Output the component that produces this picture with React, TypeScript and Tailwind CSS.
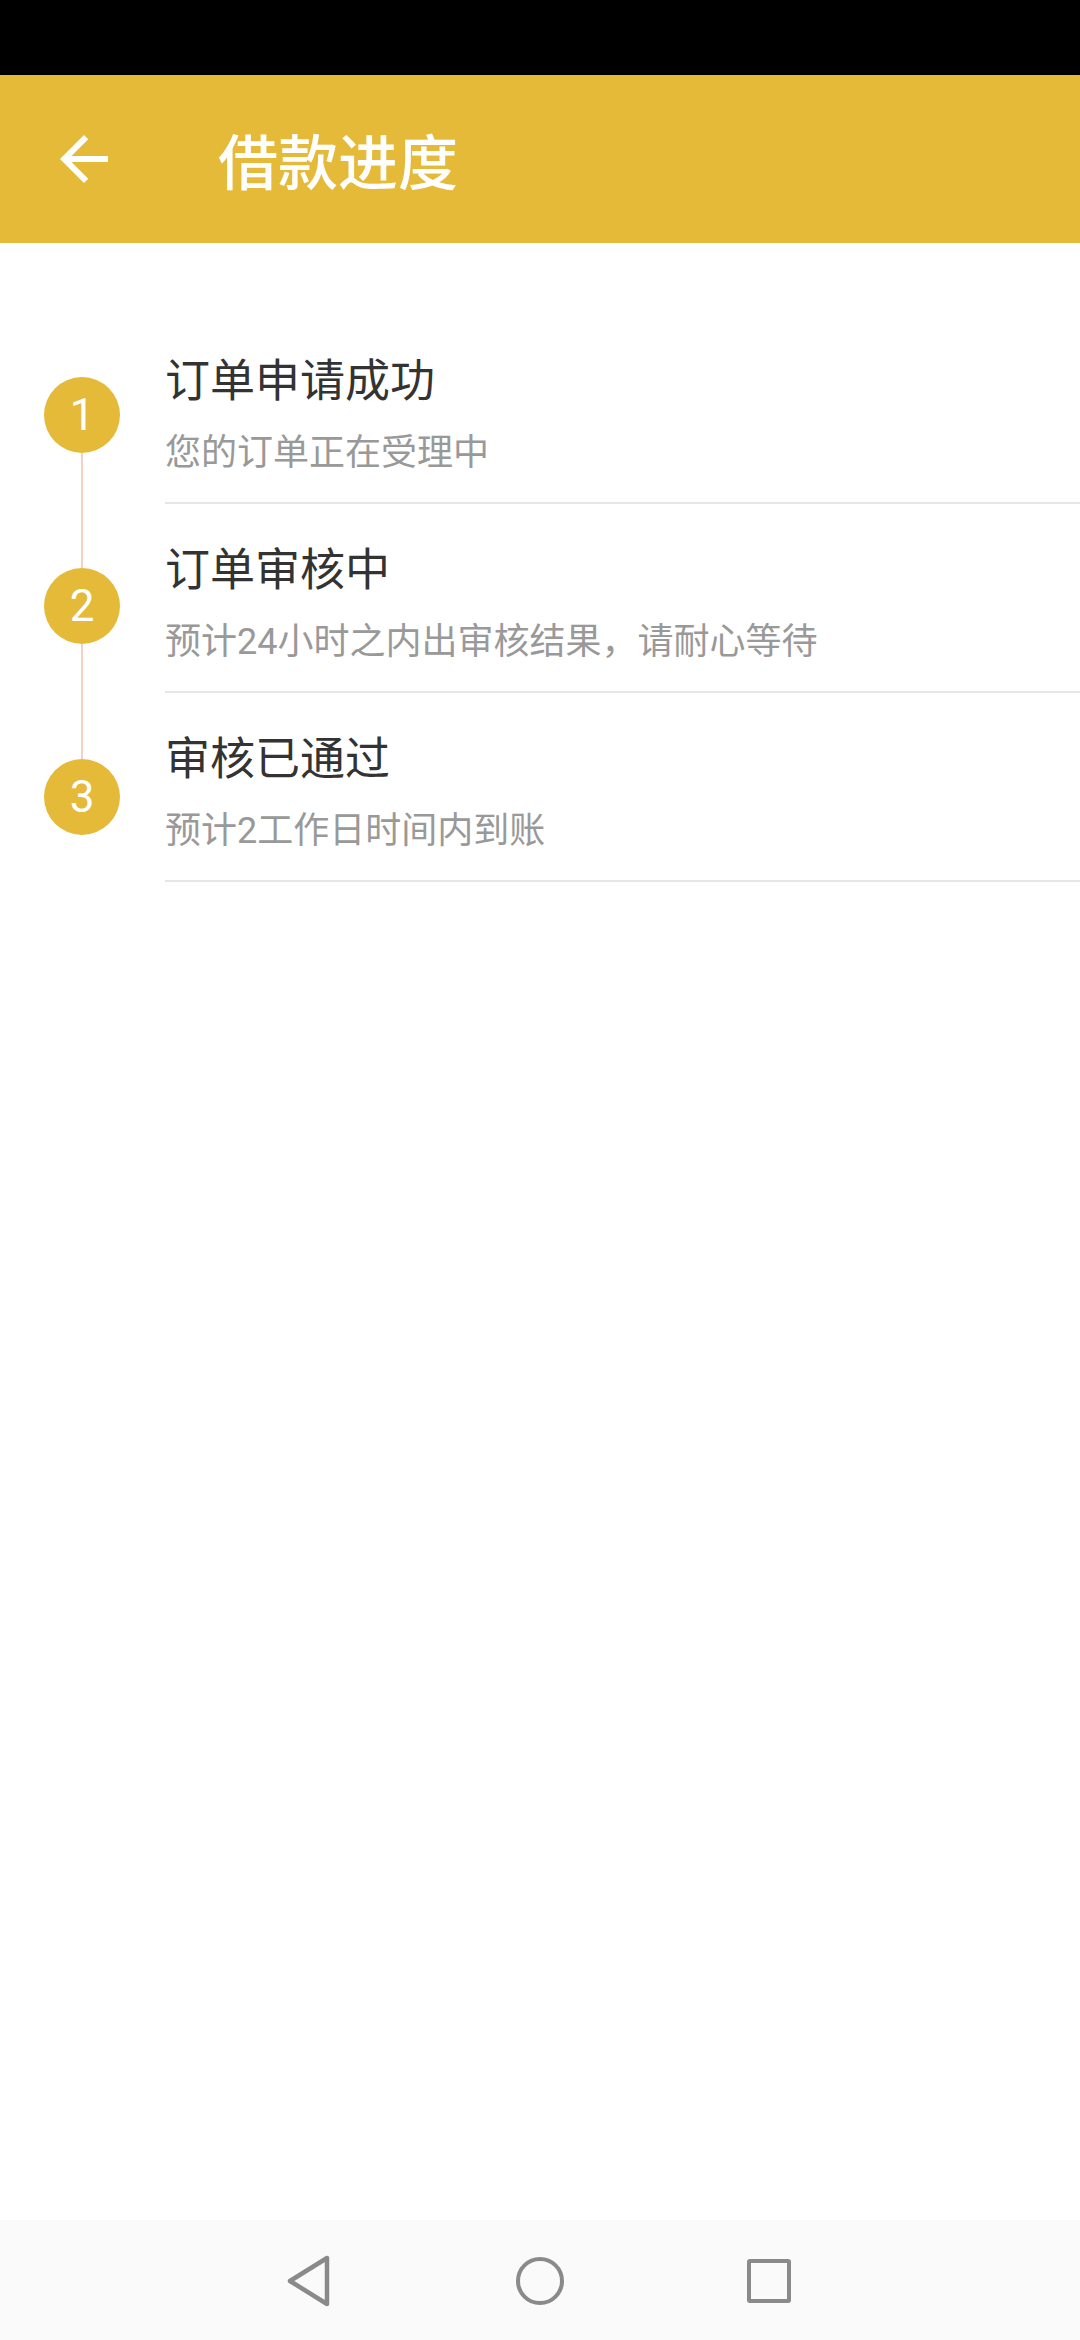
import React from "react";

const steps = [
  { n: "1", title: "订单申请成功", sub: "您的订单正在受理中", top: "h-[62px]" },
  { n: "2", title: "订单审核中", sub: "预计24小时之内出审核结果，请耐心等待", top: "h-[64px]" },
  { n: "3", title: "审核已通过", sub: "预计2工作日时间内到账", top: "h-[66px]" },
];

const font = { fontFamily: 'Roboto, "Noto Sans CJK SC", "Noto Sans", sans-serif' };
const cjk = { fontFamily: '"Noto Sans CJK SC", "Noto Sans", sans-serif' };

export default function App() {
  return (
    <div className="min-h-screen w-full flex flex-col bg-white" style={font}>
      <div className="h-[75px] bg-black shrink-0" />
      <div className="h-[168px] bg-[#e5ba38] flex items-center shrink-0">
        <div className="ml-[48px] w-[72px] h-[72px] flex items-center justify-center">
          <svg viewBox="0 0 24 24" width="72" height="72" fill="#ffffff">
            <path d="M20 11H7.83l5.59-5.59L12 4l-8 8 8 8 1.41-1.41L7.83 13H20v-2z" />
          </svg>
        </div>
        <div className="ml-[98px] text-white text-[60px] leading-[72px] font-medium" style={cjk}>
          借款进度
        </div>
      </div>

      <div className="flex-1 pt-[72px]">
        {steps.map((s, i) => (
          <div key={s.n} className="flex h-[189px]">
            <div className="w-[165px] shrink-0">
              <div className="ml-[44px] w-[76px] h-full flex flex-col items-center">
                <div className={"w-[2px] shrink-0 " + s.top + " " + (i === 0 ? "bg-transparent" : "bg-[#f3d2c3]")} />
                <div className="w-[76px] h-[76px] rounded-full bg-[#e5ba38] flex items-center justify-center text-white text-[44px] leading-none shrink-0">
                  {s.n}
                </div>
                <div className={"w-[2px] flex-1 " + (i === steps.length - 1 ? "bg-transparent" : "bg-[#f3d2c3]")} />
              </div>
            </div>
            <div className="flex-1 flex flex-col pt-[40px] border-b-2 border-[#e6e6e6]">
              <div className="text-[45px] leading-[54px] text-[#333333]">{s.title}</div>
              <div className="mt-[20px] text-[36px] leading-[48px] text-[#999999]">{s.sub}</div>
            </div>
          </div>
        ))}
      </div>

      <div className="h-[120px] bg-[#fafafa] shrink-0 relative">
        <svg width="60" height="60" viewBox="0 0 60 60" className="absolute left-[282px] top-[31px]">
          <path d="M8 30 L45 7 L45 53 Z" fill="none" stroke="#8a8a8a" strokeWidth="4.5" strokeLinejoin="round" />
        </svg>
        <div className="absolute left-[516px] top-[37px] w-[48px] h-[48px] rounded-full border-[4.5px] border-[#8a8a8a]" />
        <div className="absolute left-[747px] top-[39px] w-[44px] h-[44px] rounded-[3px] border-[4.5px] border-[#8a8a8a]" />
      </div>
    </div>
  );
}
